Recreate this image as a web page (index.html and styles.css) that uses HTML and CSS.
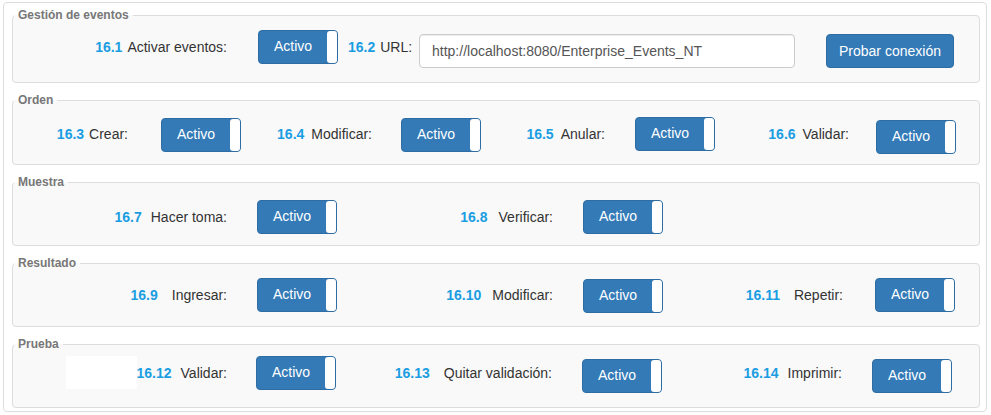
FILE: index.html
```html
<!DOCTYPE html>
<html lang="es">
<head>
<meta charset="utf-8">
<title>Gestión de eventos</title>
<link rel="stylesheet" href="styles.css">
</head>
<body>
<div class="panel">
  <fieldset class="group fs-gestion">
    <legend>Gestión de eventos</legend>
    <div class="fields row-gestion">
      <div class="lbl"><span class="num ga">16.1</span>Activar eventos:</div>
      <div class="toggle"><span class="toggle-on">Activo</span><span class="toggle-handle"></span></div>
      <div class="lbl lbl-left"><span class="num ga">16.2</span>URL:</div>
      <input class="url-input" type="text" value="http://localhost:8080/Enterprise_Events_NT">
      <button class="btn-primary" type="button">Probar conexión</button>
    </div>
  </fieldset>

  <fieldset class="group fs-orden">
    <legend>Orden</legend>
    <div class="fields row-orden">
      <div class="lbl"><span class="num ga">16.3</span>Crear:</div>
      <div class="toggle mt1"><span class="toggle-on">Activo</span><span class="toggle-handle"></span></div>
      <div class="lbl"><span class="num gb">16.4</span>Modificar:</div>
      <div class="toggle mt1"><span class="toggle-on">Activo</span><span class="toggle-handle"></span></div>
      <div class="lbl"><span class="num gb">16.5</span>Anular:</div>
      <div class="toggle"><span class="toggle-on">Activo</span><span class="toggle-handle"></span></div>
      <div class="lbl"><span class="num gb">16.6</span>Validar:</div>
      <div class="toggle mt3"><span class="toggle-on">Activo</span><span class="toggle-handle"></span></div>
    </div>
  </fieldset>

  <fieldset class="group fs-muestra">
    <legend>Muestra</legend>
    <div class="fields row-three">
      <div class="lbl"><span class="num gc">16.7</span>Hacer toma:</div>
      <div class="toggle"><span class="toggle-on">Activo</span><span class="toggle-handle"></span></div>
      <div class="lbl"><span class="num ge">16.8</span>Verificar:</div>
      <div class="toggle"><span class="toggle-on">Activo</span><span class="toggle-handle"></span></div>
    </div>
  </fieldset>

  <fieldset class="group fs-resultado">
    <legend>Resultado</legend>
    <div class="fields row-three">
      <div class="lbl"><span class="num gd">16.9</span>Ingresar:</div>
      <div class="toggle"><span class="toggle-on">Activo</span><span class="toggle-handle"></span></div>
      <div class="lbl"><span class="num ge">16.10</span>Modificar:</div>
      <div class="toggle mt1"><span class="toggle-on">Activo</span><span class="toggle-handle"></span></div>
      <div class="lbl"><span class="num gd">16.11</span>Repetir:</div>
      <div class="toggle"><span class="toggle-on">Activo</span><span class="toggle-handle"></span></div>
    </div>
  </fieldset>

  <fieldset class="group fs-prueba">
    <legend>Prueba</legend>
    <div class="fields row-prueba">
      <div class="lbl"><span class="blank"></span><span class="num gc">16.12</span>Validar:</div>
      <div class="toggle"><span class="toggle-on">Activo</span><span class="toggle-handle"></span></div>
      <div class="lbl"><span class="num gd">16.13</span>Quitar validación:</div>
      <div class="toggle mt3"><span class="toggle-on">Activo</span><span class="toggle-handle"></span></div>
      <div class="lbl"><span class="num gc">16.14</span>Imprimir:</div>
      <div class="toggle mt3"><span class="toggle-on">Activo</span><span class="toggle-handle"></span></div>
    </div>
  </fieldset>
</div>
</body>
</html>
```

FILE: styles.css
```css
* { box-sizing: border-box; }

body {
  margin: 0;
  background: #fff;
  font-family: "Liberation Sans", Arial, sans-serif;
  font-size: 14px;
  color: #333;
}

.panel {
  margin: 2px 0 0 3px;
  width: 984px;
  height: 410px;
  border: 1px solid #ddd;
  border-radius: 4px;
  padding-top: 5px;
  background: #fff;
}

.group {
  margin: 0 6px 10px 8px;
  padding: 10px 0 11px 0;
  border: 1px solid #ddd;
  border-radius: 4px;
  background: #f9f9f9;
  min-width: 0;
}

.group legend {
  margin-left: 1px;
  padding: 0 4px;
  font-size: 12px;
  line-height: 14px;
  font-weight: bold;
  color: #777;
}

.fs-gestion { padding: 8px 0 14px 0; }
.fs-orden { padding: 10px 0 10px 0; }
.fs-muestra { padding: 11px 0 11px 0; }
.fs-resultado { padding: 8px 0 13px 0; }
.fs-prueba { padding: 5px 0 14px 0; }

.fields {
  display: grid;
  align-items: start;
}

.row-gestion { grid-template-columns: 214px 111px 81px 376px 159px; }
.row-orden { grid-template-columns: 115px 113px 131px 109px 124px 110px 134px 107px; }
.row-three { grid-template-columns: 214px 110px 216px 110px 180px 112px; }
.row-prueba { grid-template-columns: 214px 109px 216px 110px 180px 110px; }

.lbl {
  text-align: right;
  white-space: nowrap;
  line-height: 34px;
  height: 34px;
  color: #333;
}

.lbl-left {
  text-align: left;
  padding-left: 10px;
}

.num {
  font-weight: bold;
  color: #1b9de2;
}
.ga { margin-right: 5px; }
.gb { margin-right: 7px; }
.gc { margin-right: 9px; }
.ge { margin-right: 11px; }
.gd { margin-right: 14px; }

.blank {
  display: inline-block;
  width: 71px;
  height: 33px;
  background: #fff;
  vertical-align: top;
}

.toggle {
  justify-self: end;
  display: flex;
  width: 80px;
  height: 34px;
  border: 1px solid #2e6da4;
  border-radius: 4px;
  background: #337ab7;
  overflow: hidden;
}
.mt1 { margin-top: 1px; }
.mt3 { margin-top: 3px; }

.toggle-on {
  flex: 1;
  color: #fff;
  text-align: center;
  line-height: 31px;
}

.toggle-handle {
  width: 10px;
  background: #fff;
  border-radius: 3px 0 0 3px;
}

.url-input {
  margin-top: 4px;
  width: 376px;
  height: 34px;
  padding: 6px 12px;
  border: 1px solid #ccc;
  border-radius: 4px;
  background: #fff;
  box-shadow: inset 0 1px 1px rgba(0, 0, 0, 0.075);
  font-family: "Liberation Sans", Arial, sans-serif;
  font-size: 14px;
  color: #555;
}

.btn-primary {
  justify-self: end;
  margin-top: 4px;
  width: 128px;
  height: 34px;
  padding: 0;
  border: 1px solid #2e6da4;
  border-radius: 4px;
  background: #337ab7;
  color: #fff;
  font-family: "Liberation Sans", Arial, sans-serif;
  font-size: 14px;
}
```
